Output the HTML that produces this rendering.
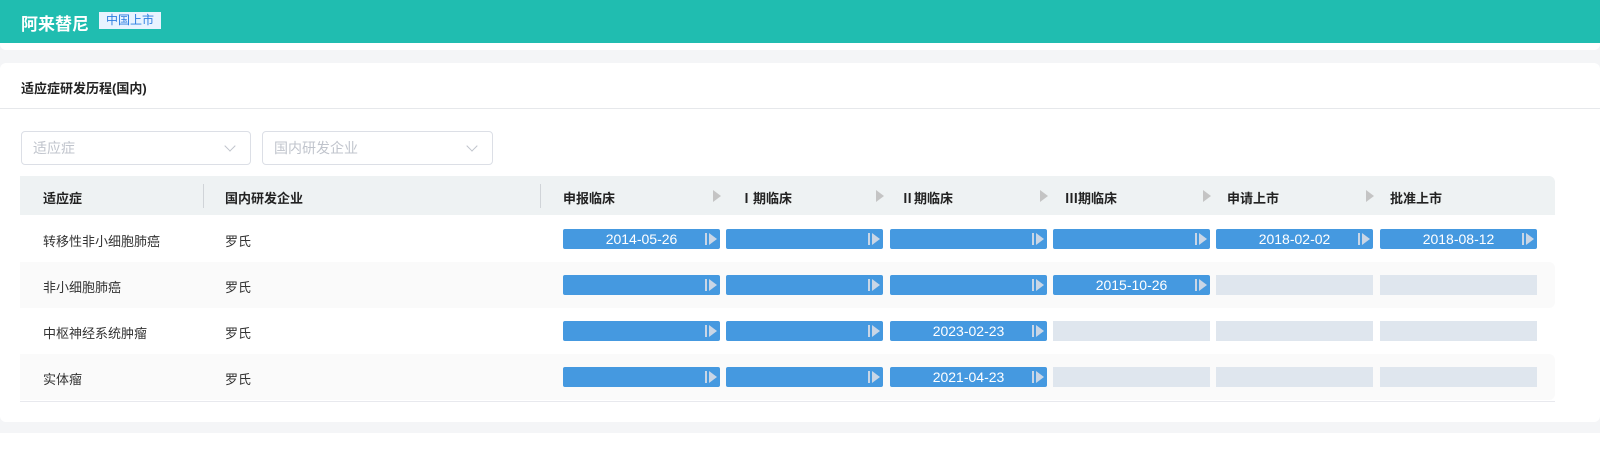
<!DOCTYPE html>
<html><head><meta charset="utf-8"><style>
*{margin:0;padding:0;box-sizing:border-box}
body{width:1600px;height:452px;background:#f4f5f7;font-family:"Liberation Sans","Noto Sans CJK SC",sans-serif;position:relative;overflow:hidden;font-size:13px;color:#333}
.top{position:absolute;left:0;top:0;width:1600px;height:43px;background:#20bdb0}
.top .t{position:absolute;left:21px;top:10px;color:#fff;font-size:17px;font-weight:bold}
.top .tag{position:absolute;left:99px;top:12px;height:17px;width:62px;background:#e8f3ff;color:#2a7ce0;font-size:12px;line-height:17px;text-align:center}
.strip{position:absolute;left:0;top:43px;width:1600px;height:7px;background:#fff;border-radius:0 0 6px 6px}
.card{position:absolute;left:0;top:63px;width:1600px;height:359px;background:#fff;border-radius:6px}
.ttl{position:absolute;left:21px;top:15px;font-size:13px;font-weight:bold;color:#222}
.hr{position:absolute;left:0;top:45px;width:1600px;height:1px;background:#e6e8eb}
.sel{position:absolute;top:68px;height:34px;border:1px solid #dcdfe6;border-radius:4px;color:#c0c4cc;font-size:14px;line-height:32px;padding-left:11px}
.sel::after{content:"";position:absolute;right:16px;top:10px;width:7px;height:7px;border-right:1px solid #c0c4cc;border-bottom:1px solid #c0c4cc;transform:rotate(45deg)}
.th{position:absolute;left:20px;top:113px;width:1535px;height:39px;background:#eef2f3;border-radius:0 6px 0 0}
.th span{position:absolute;top:12px;font-weight:bold;font-size:13px;color:#222}
.div{position:absolute;top:8px;width:1px;height:24px;background:#d0d4d8}
.tri{position:absolute;top:14px;width:0;height:0;border-left:8px solid #c4c4c4;border-top:6px solid transparent;border-bottom:6px solid transparent}
.row{position:absolute;left:20px;width:1535px;height:46px}
.row.alt{background:#fafafa;border-radius:0 6px 6px 0}
.row .c{position:absolute;top:15px;font-size:13px;color:#333}
.bar{position:absolute;top:13px;height:20px;width:157px;background:#4599e0;border-radius:2px;color:#fff;font-size:14px;line-height:20px;text-align:center}
.bar.e{background:#dfe6ee;border-radius:0}
.bar:not(.e)::before{content:"";position:absolute;right:13px;top:4px;width:2px;height:12px;background:#c9d6e6}
.bar:not(.e)::after{content:"";position:absolute;right:3px;top:4px;border-left:8px solid #c9d6e6;border-top:6px solid transparent;border-bottom:6px solid transparent}
.bl{position:absolute;left:20px;top:338px;width:1535px;height:1px;background:#e8e9ee}
.bot{position:absolute;left:0;top:433px;width:1600px;height:19px;background:#fff}
</style></head><body>
<div class="top"><div class="t">阿来替尼</div><div class="tag">中国上市</div></div>
<div class="strip"></div>
<div class="card">
<div class="ttl">适应症研发历程(国内)</div>
<div class="hr"></div>
<div class="sel" style="left:21px;width:230px">适应症</div>
<div class="sel" style="left:262px;width:231px">国内研发企业</div>
<div class="th">
<span style="left:23px">适应症</span><div class="div" style="left:183px"></div>
<span style="left:205px">国内研发企业</span><div class="div" style="left:520px"></div>
<span style="left:543px">申报临床</span><div class="tri" style="left:693px"></div>
<span style="left:720px">Ⅰ期临床</span><div class="tri" style="left:856px"></div>
<span style="left:881px">Ⅱ期临床</span><div class="tri" style="left:1020px"></div>
<span style="left:1045px">Ⅲ期临床</span><div class="tri" style="left:1183px"></div>
<span style="left:1207px">申请上市</span><div class="tri" style="left:1346px"></div>
<span style="left:1370px">批准上市</span>
</div>
<div class="row" style="top:153px"><span class="c" style="left:23px">转移性非小细胞肺癌</span><span class="c" style="left:205px">罗氏</span>
<div class="bar" style="left:543px">2014-05-26</div><div class="bar" style="left:706px"></div><div class="bar" style="left:870px"></div><div class="bar" style="left:1033px"></div><div class="bar" style="left:1196px">2018-02-02</div><div class="bar" style="left:1360px">2018-08-12</div></div>
<div class="row alt" style="top:199px"><span class="c" style="left:23px">非小细胞肺癌</span><span class="c" style="left:205px">罗氏</span>
<div class="bar" style="left:543px"></div><div class="bar" style="left:706px"></div><div class="bar" style="left:870px"></div><div class="bar" style="left:1033px">2015-10-26</div><div class="bar e" style="left:1196px"></div><div class="bar e" style="left:1360px"></div></div>
<div class="row" style="top:245px"><span class="c" style="left:23px">中枢神经系统肿瘤</span><span class="c" style="left:205px">罗氏</span>
<div class="bar" style="left:543px"></div><div class="bar" style="left:706px"></div><div class="bar" style="left:870px">2023-02-23</div><div class="bar e" style="left:1033px"></div><div class="bar e" style="left:1196px"></div><div class="bar e" style="left:1360px"></div></div>
<div class="row alt" style="top:291px"><span class="c" style="left:23px">实体瘤</span><span class="c" style="left:205px">罗氏</span>
<div class="bar" style="left:543px"></div><div class="bar" style="left:706px"></div><div class="bar" style="left:870px">2021-04-23</div><div class="bar e" style="left:1033px"></div><div class="bar e" style="left:1196px"></div><div class="bar e" style="left:1360px"></div></div>
<div class="bl"></div>
</div>
<div class="bot"></div>
</body></html>
